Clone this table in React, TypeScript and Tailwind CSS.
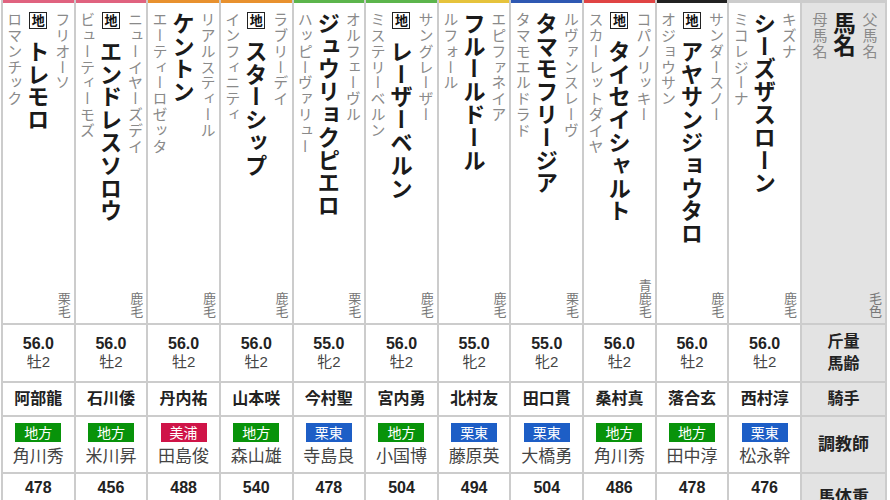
const horses = [
  { sire: "フリオーソ", name: "トレモロ", dam: "ロマンチック", chi: true, coat: "栗毛", kin: "56.0", age: "牡2", jockey: "阿部龍", belong: "地方", trainer: "角川秀", weight: "478", frame: "border-t-[#e0627f]" },
  { sire: "ニューイヤーズデイ", name: "エンドレスソロウ", dam: "ビューティーモズ", chi: true, coat: "鹿毛", kin: "56.0", age: "牡2", jockey: "石川倭", belong: "地方", trainer: "米川昇", weight: "456", frame: "border-t-[#e0627f]" },
  { sire: "リアルスティール", name: "ケントン", dam: "エーティーロゼッタ", chi: false, coat: "鹿毛", kin: "56.0", age: "牡2", jockey: "丹内祐", belong: "美浦", trainer: "田島俊", weight: "488", frame: "border-t-[#e8912f]" },
  { sire: "ラブリーデイ", name: "スターシップ", dam: "インフィニティ", chi: true, coat: "鹿毛", kin: "56.0", age: "牡2", jockey: "山本咲", belong: "地方", trainer: "森山雄", weight: "540", frame: "border-t-[#e8912f]" },
  { sire: "オルフェーヴル", name: "ジュウリョクピエロ", dam: "ハッピーヴァリュー", chi: false, coat: "栗毛", kin: "55.0", age: "牝2", jockey: "今村聖", belong: "栗東", trainer: "寺島良", weight: "478", frame: "border-t-[#5cb54c]" },
  { sire: "サングレーザー", name: "レーザーベルン", dam: "ミステリーベルン", chi: true, coat: "鹿毛", kin: "56.0", age: "牡2", jockey: "宮内勇", belong: "地方", trainer: "小国博", weight: "504", frame: "border-t-[#5cb54c]" },
  { sire: "エピファネイア", name: "フルールドール", dam: "ルフォール", chi: false, coat: "鹿毛", kin: "55.0", age: "牝2", jockey: "北村友", belong: "栗東", trainer: "藤原英", weight: "494", frame: "border-t-[#e6c33c]" },
  { sire: "ルヴァンスレーヴ", name: "タマモフリージア", dam: "タマモエルドラド", chi: false, coat: "栗毛", kin: "55.0", age: "牝2", jockey: "田口貫", belong: "栗東", trainer: "大橋勇", weight: "504", frame: "border-t-[#2f58b2]" },
  { sire: "コパノリッキー", name: "タイセイシャルト", dam: "スカーレットダイヤ", chi: true, coat: "青鹿毛", kin: "56.0", age: "牡2", jockey: "桑村真", belong: "地方", trainer: "角川秀", weight: "486", frame: "border-t-[#e04444]" },
  { sire: "サンダースノー", name: "アヤサンジョウタロ", dam: "オジョウサン", chi: true, coat: "鹿毛", kin: "56.0", age: "牡2", jockey: "落合玄", belong: "地方", trainer: "田中淳", weight: "478", frame: "border-t-[#222222]" },
  { sire: "キズナ", name: "シーズザスローン", dam: "ミコレジーナ", chi: false, coat: "鹿毛", kin: "56.0", age: "牡2", jockey: "西村淳", belong: "栗東", trainer: "松永幹", weight: "476", frame: "border-t-[#cccccc]" },
];

const badge: Record<string, string> = {
  地方: "bg-[#08930a]",
  美浦: "bg-[#cf1448]",
  栗東: "bg-[#1d5ec6]",
};

// vertical japanese text, CJK font named first so kana advance is a full em
const vert = "[writing-mode:vertical-rl] font-['Noto_Sans_CJK_JP',sans-serif]";
const small = `${vert} text-[15px] leading-[14px] tracking-[0.8px] text-[#8a8a8a]`;

const NameCell = ({ h }: { h: (typeof horses)[number] }) => (
  <div className={`flex flex-col bg-white border-t-[3px] ${h.frame}`}>
    <div className="flex flex-row justify-center items-start gap-[6px] pt-[9px]">
      <div className={small}>{h.dam}</div>
      <div className="flex flex-col items-center w-[22px]">
        {h.chi && (
          <div className="mb-[11px] flex h-[17px] w-[18px] items-center justify-center border border-[#222] text-[13px] font-bold leading-none text-[#111]">
            地
          </div>
        )}
        <div className={`${vert} text-[22.5px] leading-[22px] tracking-[0.3px] font-bold text-[#1a1a1a]`}>{h.name}</div>
      </div>
      <div className={small}>{h.sire}</div>
    </div>
    <div className={`${vert} mt-auto self-end mr-[3px] mb-[5px] text-[13px] leading-[13px] text-[#777]`}>
      {h.coat}
    </div>
  </div>
);

export default function App() {
  return (
    <div
      className="w-[890px] h-[500px] overflow-hidden bg-white"
      style={{ fontFamily: '"Liberation Sans", "Noto Sans CJK JP", sans-serif' }}
    >
      <div className="ml-[1px] w-[886px] grid grid-cols-[repeat(11,minmax(0,1fr))_83px] grid-rows-[323px_56px_32px_55px_40px] gap-[2px] px-[2px] bg-[#cccccc]">
        {/* row 1: names */}
        {horses.map((h, i) => (
          <NameCell key={"n" + i} h={h} />
        ))}
        <div className="flex flex-col bg-[#e3e3e3] border-t-[3px] border-t-[#cccccc]">
          <div className="flex flex-row justify-center items-start gap-[7px] pt-[9px] pl-[2px]">
            <div className={small}>母馬名</div>
            <div className={`${vert} text-[22.5px] leading-[22px] font-bold text-[#1a1a1a]`}>馬名</div>
            <div className={small}>父馬名</div>
          </div>
          <div className={`${vert} mt-auto self-end mr-[3px] mb-[5px] text-[13px] leading-[13px] text-[#777]`}>
            毛色
          </div>
        </div>

        {/* row 2: kinryo / age */}
        {horses.map((h, i) => (
          <div key={"k" + i} className="flex flex-col items-center justify-center bg-white">
            <div className="text-[16px] leading-[18px] font-bold text-[#222]">{h.kin}</div>
            <div className="text-[15px] leading-[18px] text-[#444]">{h.age}</div>
          </div>
        ))}
        <div className="flex flex-col items-center justify-center bg-[#e3e3e3] text-[16px] leading-[22px] font-bold text-[#222]">
          <div>斤量</div>
          <div>馬齢</div>
        </div>

        {/* row 3: jockey */}
        {horses.map((h, i) => (
          <div key={"j" + i} className="flex items-center justify-center bg-white text-[16px] font-bold text-[#222]">
            {h.jockey}
          </div>
        ))}
        <div className="flex items-center justify-center bg-[#e3e3e3] text-[16px] font-bold text-[#222]">騎手</div>

        {/* row 4: trainer */}
        {horses.map((h, i) => (
          <div key={"t" + i} className="flex flex-col items-center bg-white pt-[6px]">
            <div className={`flex h-[19px] w-[46px] items-center justify-center text-[14px] leading-none text-white ${badge[h.belong]}`}>
              {h.belong}
            </div>
            <div className="mt-[4px] text-[17px] leading-[22px] text-[#444]">{h.trainer}</div>
          </div>
        ))}
        <div className="flex items-center justify-center bg-[#e3e3e3] text-[17px] font-bold text-[#222]">調教師</div>

        {/* row 5: body weight */}
        {horses.map((h, i) => (
          <div key={"w" + i} className="flex justify-center bg-white pt-[5px] text-[16px] leading-[18px] font-bold text-[#222]">
            {h.weight}
          </div>
        ))}
        <div className="flex justify-center bg-[#e3e3e3] pt-[13px] text-[17px] leading-[22px] font-bold text-[#222]">馬体重</div>
      </div>
    </div>
  );
}
